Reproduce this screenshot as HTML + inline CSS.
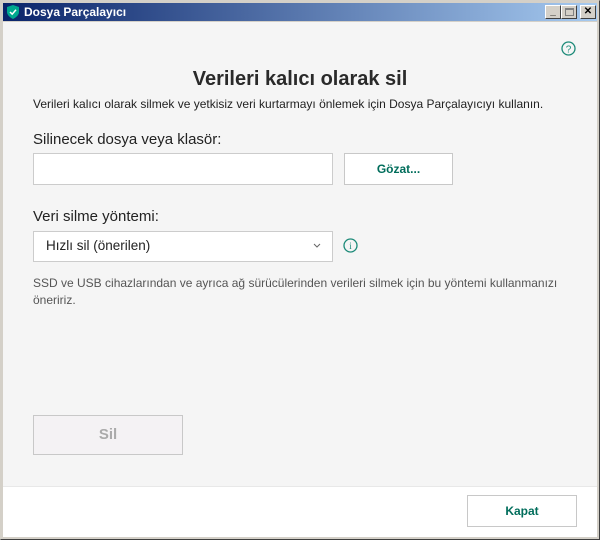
<!DOCTYPE html>
<html><head><meta charset="utf-8"><style>
*{margin:0;padding:0;box-sizing:border-box}
body{width:600px;height:540px;overflow:hidden;background:#d4d0c8;font-family:"Liberation Sans",sans-serif;position:relative}
.win{position:absolute;left:0;top:0;width:600px;height:540px;border:1px solid #d4d0c8;border-right-color:#404040;border-bottom-color:#404040}
.tb{position:absolute;left:3px;top:3px;width:594px;height:18px;background:linear-gradient(90deg,#0a246a,#a6caf0)}
.tt{position:absolute;left:21px;top:2px;color:#fff;font-weight:bold;font-size:12px}
.wb{position:absolute;top:2px;width:16px;height:14px;background:#d4d0c8;border:1px solid;border-color:#fff #404040 #404040 #fff;font-size:10px;font-weight:bold;text-align:center;line-height:12px}
.content{position:absolute;left:3px;top:22px;width:594px;height:464px;background:#f5f5f5}
.foot{position:absolute;left:3px;top:486px;width:594px;height:51px;background:#fff;border-top:1px solid #e8e8e8}
.t{position:absolute;color:#222;white-space:nowrap}
.box{position:absolute;background:#fff;border:1px solid #ccc}
.btn{position:absolute;border:1px solid #c8c8c8;background:#fff;text-align:center;color:#006d5b;font-size:12px;font-weight:bold}
</style></head><body>
<div class="win"></div>
<div class="tb">
<svg style="position:absolute;left:4px;top:2px" width="12" height="14" viewBox="0 0 12 14"><path d="M6 0L12 2V7C12 10 9 12.5 6 14C3 12.5 0 10 0 7V2Z" fill="#00a88e"/><path d="M3 7L5.2 9.2L9 4.8" stroke="#fff" stroke-width="1.5" fill="none"/></svg>
<div class="tt">Dosya Parçalayıcı</div>
<div class="wb" style="left:542px">_</div>
<div class="wb" style="left:558px"><div style="margin:2px auto;width:9px;height:8px;border:1px solid #808080;border-top-width:2px"></div></div>
<div class="wb" style="left:577px">✕</div>
</div>
<div class="content"></div>
<div class="foot"></div>
<svg style="position:absolute;left:561px;top:41px" width="15" height="15" viewBox="0 0 15 15"><circle cx="7.5" cy="7.5" r="6.5" fill="none" stroke="#1c8a78" stroke-width="1.3"/><text x="7.5" y="11.3" font-size="10" text-anchor="middle" fill="#1c8a78" font-family="Liberation Sans">?</text></svg>
<div class="t" style="left:0;width:600px;text-align:center;top:68px;font-size:20px;font-weight:bold;color:#2a2a2a">Verileri kalıcı olarak sil</div>
<div class="t" style="left:33px;top:97px;font-size:12px">Verileri kalıcı olarak silmek ve yetkisiz veri kurtarmayı önlemek için Dosya Parçalayıcıyı kullanın.</div>
<div class="t" style="left:33px;top:131px;font-size:15px">Silinecek dosya veya klasör:</div>
<div class="box" style="left:33px;top:153px;width:300px;height:32px"></div>
<div class="btn" style="left:344px;top:153px;width:109px;height:32px;line-height:30px">Gözat...</div>
<div class="t" style="left:33px;top:208px;font-size:15px">Veri silme yöntemi:</div>
<div class="box" style="left:33px;top:231px;width:300px;height:31px"></div>
<div class="t" style="left:46px;top:238px;font-size:13.5px">Hızlı sil (önerilen)</div>
<svg style="position:absolute;left:313px;top:243px" width="8" height="6" viewBox="0 0 8 6"><path d="M1 1L4 4L7 1" stroke="#666" fill="none"/></svg>
<svg style="position:absolute;left:343px;top:238px" width="15" height="15" viewBox="0 0 15 15"><circle cx="7.5" cy="7.5" r="6.5" fill="none" stroke="#1c8a78" stroke-width="1.3"/><text x="7.5" y="11" font-size="9" text-anchor="middle" fill="#1c8a78" font-family="Liberation Serif">i</text></svg>
<div class="t" style="left:33px;top:275px;font-size:12px;color:#555;line-height:17px">SSD ve USB cihazlarından ve ayrıca ağ sürücülerinden verileri silmek için bu yöntemi kullanmanızı<br>öneririz.</div>
<div class="btn" style="left:33px;top:415px;width:150px;height:40px;line-height:38px;background:#f4f2f4;color:#aaa;font-size:15px">Sil</div>
<div class="btn" style="left:467px;top:495px;width:110px;height:32px;line-height:30px">Kapat</div>
</body></html>
